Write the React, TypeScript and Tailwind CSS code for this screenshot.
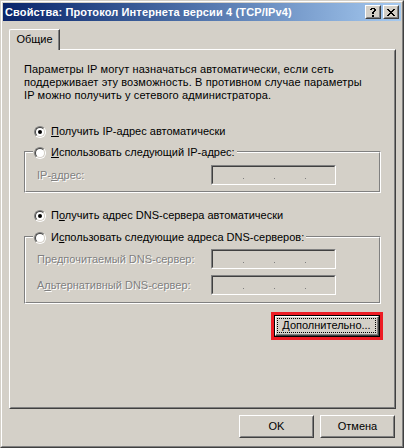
import type { ReactNode } from "react";

// classic win2k palette
const FACE = "bg-[#d4d0c8]";

function Radio({ checked }: { checked?: boolean }) {
  return (
    <span className="flex h-[12px] w-[12px] shrink-0 rounded-full border border-t-[#808080] border-l-[#808080] border-r-white border-b-white">
      <span className="flex h-full w-full items-center justify-center rounded-full border border-t-[#404040] border-l-[#404040] border-r-[#d4d0c8] border-b-[#d4d0c8] bg-white">
        {checked && <span className="h-[4px] w-[4px] rounded-full bg-black" />}
      </span>
    </span>
  );
}

function IpField() {
  return (
    <div className="flex h-[20px] w-[125px] border border-t-[#808080] border-l-[#808080] border-r-white border-b-white">
      <div className={`flex flex-1 border border-t-[#404040] border-l-[#404040] border-r-[#d4d0c8] border-b-[#d4d0c8] ${FACE}`}>
        <span className="w-[30px]" />
        <span className="mt-[11px] h-px w-px bg-[#808080]" />
        <span className="w-[30px]" />
        <span className="mt-[11px] h-px w-px bg-[#808080]" />
        <span className="w-[30px]" />
        <span className="mt-[11px] h-px w-px bg-[#808080]" />
      </div>
    </div>
  );
}

function Disabled({ children }: { children: ReactNode }) {
  return (
    <span className="text-[#808080] [text-shadow:1px_1px_0_#fff]">{children}</span>
  );
}

function RadioRow({ checked, children }: { checked?: boolean; children: ReactNode }) {
  return (
    <div className="flex h-[13px] items-center gap-[5px]">
      <Radio checked={checked} />
      <span className="pr-[2px]">{children}</span>
    </div>
  );
}

function GroupBox({ legend, children, className }: { legend: ReactNode; children: ReactNode; className: string }) {
  return (
    <div className={`ml-[13px] w-[357px] border border-t-[#808080] border-l-[#808080] border-r-white border-b-white ${className}`}>
      <div className="border border-t-white border-l-white border-r-[#808080] border-b-[#808080]">
        <div className={`-mt-[7px] ml-[7px] w-fit pl-[1px] ${FACE}`}>{legend}</div>
        {children}
      </div>
    </div>
  );
}

function FieldRow({ label, className }: { label: ReactNode; className?: string }) {
  return (
    <div className={`flex items-center pl-[11px] ${className ?? ""}`}>
      <span className="w-[174px]">{label}</span>
      <IpField />
    </div>
  );
}

function Button({ children }: { children: ReactNode }) {
  return (
    <button className="flex h-[23px] w-[75px] border border-t-white border-l-white border-r-[#404040] border-b-[#404040]">
      <span className="flex flex-1 items-center justify-center border border-t-[#d4d0c8] border-l-[#d4d0c8] border-r-[#808080] border-b-[#808080]">
        {children}
      </span>
    </button>
  );
}

function CaptionButton({ children }: { children: ReactNode }) {
  return (
    <span className={`flex h-[14px] w-[16px] border border-t-white border-l-white border-r-[#404040] border-b-[#404040] ${FACE}`}>
      <span className="flex flex-1 items-center justify-center border border-t-[#d4d0c8] border-l-[#d4d0c8] border-r-[#808080] border-b-[#808080]">
        {children}
      </span>
    </span>
  );
}

export default function App() {
  return (
    <div
      className={`flex h-[448px] w-[404px] border border-t-[#d4d0c8] border-l-[#d4d0c8] border-r-[#404040] border-b-[#404040] ${FACE} font-['Liberation_Sans',Arial,sans-serif] text-[11px] leading-[13px] text-black`}
    >
      <div className="flex flex-1 border border-t-white border-l-white border-r-[#808080] border-b-[#808080]">
        <div className="flex flex-1 flex-col border border-[#d4d0c8]">
          {/* caption */}
          <div className="flex h-[18px] items-center bg-linear-to-r from-[#0a246a] to-[#a6caf0] pl-[2px] pr-[2px]">
            <span className="flex-1 text-[11px] leading-[18px] font-bold tracking-[0.14px] text-white">
              Свойства: Протокол Интернета версии 4 (TCP/IPv4)
            </span>
            <CaptionButton>
              <svg width="6" height="9" viewBox="0 0 6 9" shapeRendering="crispEdges">
                <path d="M1 0h4v1H1zM0 1h2v1H0zM4 1h2v2H4zM3 3h2v1H3zM2 4h2v2H2zM2 7h2v2H2z" fill="#000" />
              </svg>
            </CaptionButton>
            <span className="ml-[2px]">
              <CaptionButton>
                <svg width="8" height="7" viewBox="0 0 8 7" shapeRendering="crispEdges">
                  <path d="M0 0h2v1H0zM6 0h2v1H6zM1 1h2v1H1zM5 1h2v1H5zM2 2h4v1H2zM3 3h2v1H3zM2 4h4v1H2zM1 5h2v1H1zM5 5h2v1H5zM0 6h2v1H0zM6 6h2v1H6z" fill="#000" />
                </svg>
              </CaptionButton>
            </span>
          </div>

          {/* tabs */}
          <div className="flex h-[28px] items-end pl-[6px]">
            <div className={`relative z-10 -mb-px h-[21px] w-[51px] rounded-tl-[2px] border-t border-l border-r border-t-white border-l-white border-r-[#404040] pt-[3px] text-center shadow-[inset_-1px_0_0_#808080] ${FACE}`}>
              Общие
            </div>
          </div>

          <div className="ml-[6px] h-[360px] w-[387px] border border-t-white border-l-white border-r-[#404040] border-b-[#404040]">
            <div className="flex h-full flex-col border border-t-[#d4d0c8] border-l-[#d4d0c8] border-r-[#808080] border-b-[#808080]">
              <p className="pl-[13px] pt-[12px] tracking-[0.12px]">
                Параметры IP могут назначаться автоматически, если сеть
                <br />
                поддерживает эту возможность. В противном случае параметры
                <br />
                IP можно получить у сетевого администратора.
              </p>

              <div className="mt-[23px] pl-[23px]">
                <RadioRow checked>
                  <span className="underline">П</span>олучить IP-адрес автоматически
                </RadioRow>
              </div>

              <GroupBox
                className="mt-[13px]"
                legend={
                  <RadioRow>
                    <span className="underline">И</span>спользовать следующий IP-адрес:
                  </RadioRow>
                }
              >
                <FieldRow
                  className="mt-[6px] pb-[6px]"
                  label={
                    <Disabled>
                      IP-<span className="underline">а</span>дрес:
                    </Disabled>
                  }
                />
              </GroupBox>

              <div className="mt-[16px] pl-[23px]">
                <RadioRow checked>
                  П<span className="underline">о</span>лучить адрес DNS-сервера автоматически
                </RadioRow>
              </div>

              <GroupBox
                className="mt-[14px]"
                legend={
                  <RadioRow>
                    И<span className="underline">с</span>пользовать следующие адреса DNS-серверов:
                  </RadioRow>
                }
              >
                <FieldRow
                  className="mt-[5px]"
                  label={
                    <Disabled>
                      Пре<span className="underline">д</span>почитаемый DNS-сервер:
                    </Disabled>
                  }
                />
                <FieldRow
                  className="mt-[6px] pb-[7px]"
                  label={
                    <Disabled>
                      А<span className="underline">л</span>ьтернативный DNS-сервер:
                    </Disabled>
                  }
                />
              </GroupBox>

              <div className="mt-[8px] flex justify-end pr-[11px]">
                <div className="h-[28px] w-[112px] border-[3px] border-[#ed1c24]">
                  <div className="flex h-full border border-black">
                    <div className="flex flex-1 border border-t-white border-l-white border-r-[#404040] border-b-[#404040]">
                      <div className="flex flex-1 p-px border-r border-b border-r-[#808080] border-b-[#808080]">
                        <span className="flex flex-1 items-center justify-center border border-dotted border-black">
                          <span>
                            <span className="underline">Д</span>ополнительно...
                          </span>
                        </span>
                      </div>
                    </div>
                  </div>
                </div>
              </div>
            </div>
          </div>

          <div className="mt-[6px] flex justify-end gap-[6px] pr-[6px]">
            <Button>OK</Button>
            <Button>Отмена</Button>
          </div>
        </div>
      </div>
    </div>
  );
}
